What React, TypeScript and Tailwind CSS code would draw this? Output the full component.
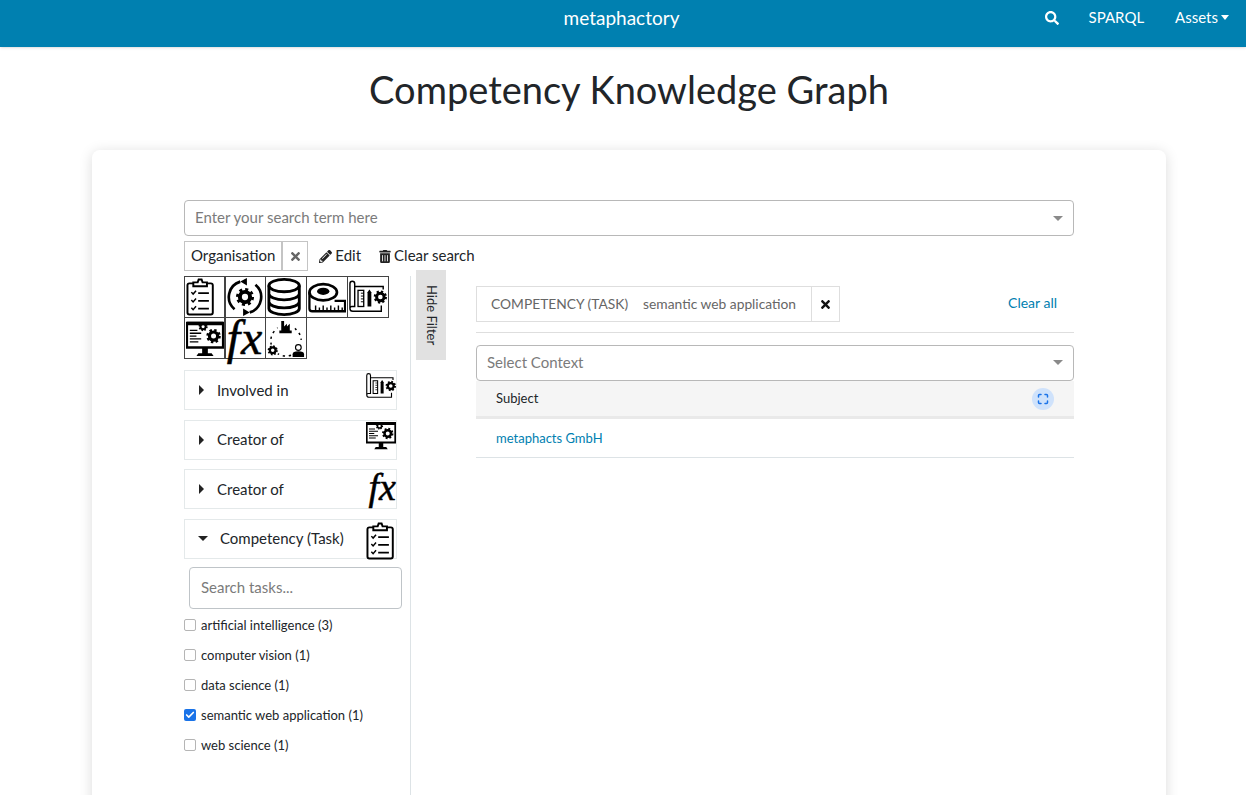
import { Check, Maximize } from 'lucide-react';
import { FaPencilAlt, FaSearch, FaTimes, FaTrashAlt } from 'react-icons/fa';

type IconProps = { className?: string };

const Gear = ({ x, y, r }: { x: number; y: number; r: number }) => (
    <g>
        <circle cx={x} cy={y} r={r * 0.72} fill="none" stroke="#000" strokeWidth={r * 0.56} />
        <circle cx={x} cy={y} r={r * 1.02} fill="none" stroke="#000" strokeWidth={r * 0.5} strokeDasharray={`${r * 0.4} ${r * 0.4}`} />
    </g>
);

const ClipboardIcon = ({ className }: IconProps) => (
    <svg viewBox="5.500 0.500 29 39" preserveAspectRatio="xMinYMid" className={className}>
        <path d="M9 6h22a2 2 0 0 1 2 2v28a2 2 0 0 1-2 2H9a2 2 0 0 1-2-2V8a2 2 0 0 1 2-2z" fill="#fff" stroke="#000" strokeWidth="2" />
        <path d="M13 9V5h4.500l1-3h3l1 3H27v4z" fill="#fff" stroke="#000" strokeWidth="2" />
        <path d="M11 15l1.800 2 3-3.500M11 23l1.800 2 3-3.500M11 31l1.800 2 3-3.500" fill="none" stroke="#000" strokeWidth="1.500" />
        <path d="M18 16h11M18 24h11M18 32h11" stroke="#000" strokeWidth="1.800" />
    </svg>
);

const CycleIcon = ({ className }: IconProps) => (
    <svg viewBox="0 0 40 40" className={className}>
        <path d="M15 3.800A17 17 0 0 0 9 33M25 36.200A17 17 0 0 0 31 7" fill="none" stroke="#000" strokeWidth="2.800" />
        <path d="M22 0l-7 3.800 7 4zM18 40l7-3.800-7-4z" fill="#000" />
        <Gear x={20} y={20} r={7.500} />
    </svg>
);

const DatabaseIcon = ({ className }: IconProps) => (
    <svg viewBox="0 0 40 40" className={className}>
        <ellipse cx="18" cy="8" rx="16" ry="6.500" fill="none" stroke="#000" strokeWidth="3" />
        <path d="M2 8v24c0 3.600 7.200 6.500 16 6.500s16-2.900 16-6.500V8M2 16.500c0 3.600 7.200 6.500 16 6.500s16-2.900 16-6.500M2 25c0 3.600 7.200 6.500 16 6.500s16-2.900 16-6.500" fill="none" stroke="#000" strokeWidth="3" />
    </svg>
);

const TapeIcon = ({ className }: IconProps) => (
    <svg viewBox="0 0 40 40" className={className}>
        <ellipse cx="16" cy="15" rx="14.500" ry="8.500" fill="none" stroke="#000" strokeWidth="2.800" />
        <ellipse cx="16" cy="14" rx="6.500" ry="3.800" fill="#000" />
        <path d="M1.500 15v17a3 3 0 0 0 3 3H39V24H28" fill="none" stroke="#000" strokeWidth="2.400" />
        <path d="M8 35v-6M12 35v-4M16 35v-6M20 35v-4M24 35v-6M28 35v-4M32 35v-6M36 35v-4" stroke="#000" strokeWidth="1.500" />
    </svg>
);

const BlueprintIcon = ({ className }: IconProps) => (
    <svg viewBox="0 0 40 40" className={className}>
        <path d="M1 6a2.500 2.500 0 0 1 5 0v24H3a2 2 0 0 0-2 2zM1 32a3 3 0 0 0 3 3h30v-6M6 9h30v3" fill="none" stroke="#000" strokeWidth="1.500" />
        <rect x="9.500" y="13" width="6" height="17" fill="#fff" stroke="#000" strokeWidth="1.400" />
        <path d="M12.500 16h3M12.500 19h3M12.500 22h3M12.500 25h3" stroke="#000" />
        <path d="M19.500 15l2-3 2 3v15h-4z" fill="#000" />
        <Gear x={33} y={20} r={5.500} />
    </svg>
);

const MonitorIcon = ({ className }: IconProps) => (
    <svg viewBox="0 0 40 40" className={className}>
        <path d="M1 4h38v26H1z" fill="#fff" stroke="#000" strokeWidth="2.400" />
        <path d="M1 3h38v3.500H1zM13 36h14l2 3H11zM17 30h6v6h-6z" fill="#000" />
        <path d="M4 12h8M4 15h12M4 18h7M4 21h12M4 24h9" stroke="#000" strokeWidth="1.400" />
        <Gear x={18} y={8} r={3.800} />
        <Gear x={29} y={18} r={6} />
    </svg>
);

const FactoryCycleIcon = ({ className }: IconProps) => (
    <svg viewBox="0 0 40 40" className={className}>
        <circle cx="20" cy="23" r="16" fill="none" stroke="#000" strokeWidth="1.600" strokeDasharray="2.500 4" />
        <rect x="11" y="0" width="18" height="17" fill="#fff" />
        <path d="M15 12V2h3v6l3-3v3l3-3v7h2v3H13v-3z" fill="#000" />
        <circle cx="6" cy="33" r="6.500" fill="#fff" />
        <Gear x={6} y={33} r={4.200} />
        <rect x="26" y="22" width="14" height="18" fill="#fff" />
        <circle cx="33" cy="30" r="3" fill="none" stroke="#000" strokeWidth="1.200" />
        <path d="M27 40v-3q0-3 6-3t6 3v3z" fill="#000" />
    </svg>
);

const FxGlyph = ({ className }: IconProps) => (
    <span className={`block font-['Liberation_Serif',serif] italic text-black [-webkit-text-stroke:0.5px_black] ${className ?? ''}`}>fx</span>
);

const Caret = ({ className }: IconProps) => <span className={`inline-block border-x-[5px] border-t-[5px] border-x-transparent ${className ?? ''}`} />;

const iconGrid = [
    <ClipboardIcon className="h-full w-full" />,
    <CycleIcon className="h-full w-full" />,
    <DatabaseIcon className="h-full w-full" />,
    <TapeIcon className="h-full w-full" />,
    <BlueprintIcon className="h-full w-full" />,
    <MonitorIcon className="h-full w-full" />,
    <FxGlyph className="text-center text-[48px] leading-[38px] tracking-[1px]" />,
    <FactoryCycleIcon className="h-full w-full" />,
];

const relations = [
    { label: 'Involved in', icon: <BlueprintIcon className="h-[30px] w-[30px]" /> },
    { label: 'Creator of', icon: <MonitorIcon className="-mt-px h-[30px] w-[30px]" /> },
    { label: 'Creator of', icon: <FxGlyph className="text-[38px] leading-[34px]" /> },
];

const tasks = [
    { label: 'artificial intelligence (3)', checked: false },
    { label: 'computer vision (1)', checked: false },
    { label: 'data science (1)', checked: false },
    { label: 'semantic web application (1)', checked: true },
    { label: 'web science (1)', checked: false },
];

const App = () => {
    return (
        <div className="h-[795px] overflow-hidden bg-white font-['Lato',sans-serif] text-[#212529]">
            <nav className="relative flex h-[47px] items-start justify-end bg-[#0080b0] pr-[17px] text-[15px] text-white shadow-sm">
                <span className="absolute left-0 right-[3px] top-[5px] text-center text-[19px] leading-[25px]">metaphactory</span>
                <FaSearch className="mr-[30px] mt-[11px] h-[14px] w-[14px]" />
                <span className="mr-[31px] mt-[7px] leading-[20px]">SPARQL</span>
                <span className="mt-[7px] flex items-center leading-[20px]">
                    Assets
                    <span className="ml-[3px] inline-block border-x-[4.500px] border-t-[5px] border-x-transparent border-t-white" />
                </span>
            </nav>

            <h1 className="pl-[12px] pt-[18px] text-center text-[38px] font-normal leading-[48px]">Competency Knowledge Graph</h1>

            <main className="ml-[92px] mr-[80px] mt-[37px] h-[700px] rounded-lg bg-white px-[92px] pt-[50px] shadow-[0_2px_14px_rgba(0,0,0,0.14)]">
                <div className="flex h-9 items-center justify-between rounded border border-[#b8b8b8] pb-[2px] pl-[10px] pr-[10px] text-[15px] text-[#7b7b7b]">
                    Enter your search term here
                    <Caret className="mt-[2px] border-t-[#8a8a8a]" />
                </div>

                <div className="mt-[5px] flex h-[30px] items-center text-[15px]">
                    <span className="flex h-[30px] items-center border border-[#c4c4c4] pb-px pl-[6px] pr-[6px]">Organisation</span>
                    <span className="flex h-[30px] w-[26px] items-center justify-center border border-[#c4c4c4]">
                        <FaTimes className="h-[13px] w-[11px] text-[#666]" />
                    </span>
                    <FaPencilAlt className="ml-[11px] h-[13px] w-[13px] text-[#222]" />
                    <span className="ml-[3px] pb-px">Edit</span>
                    <FaTrashAlt className="ml-[18px] h-[13px] w-[12px] text-[#222]" />
                    <span className="ml-[3px] pb-px">Clear search</span>
                </div>

                <div className="flex">
                    <aside className="mt-[5px] h-[600px] w-[227px] border-r border-[#dde3e6] pr-[8px]">
                        <div className="grid w-[205px] grid-cols-[40px_41px_41px_41px_41px]">
                            {iconGrid.map((icon, i) => (
                                <div key={i} className="-mb-px h-[42px] w-[42px] border border-[#444] p-px">
                                    {icon}
                                </div>
                            ))}
                        </div>

                        <div className="mt-[12px] flex w-[213px] flex-col gap-[9.500px] text-[15px]">
                            {relations.map((rel, i) => (
                                <div key={i} className="flex h-[40px] items-center justify-between border border-[#e4e9ea] pl-[14px]">
                                    <span className="flex items-center">
                                        <span className="inline-block border-y-[5px] border-l-[5px] border-y-transparent border-l-[#222]" />
                                        <span className="ml-[13px]">{rel.label}</span>
                                    </span>
                                    <span className="flex h-[30px] self-start">{rel.icon}</span>
                                </div>
                            ))}
                            <div className="flex h-[40px] items-center justify-between border border-[#e4e9ea] pl-[13px]">
                                <span className="flex items-center">
                                    <Caret className="border-t-[#222]" />
                                    <span className="ml-[12px]">Competency (Task)</span>
                                </span>
                                <ClipboardIcon className="mt-[2px] h-[38px] w-[30px] shrink-0 self-start" />
                            </div>
                        </div>

                        <div className="ml-[5px] mt-[8px] flex h-[42px] w-[213px] items-center rounded border border-[#bfc4c8] pl-[11px] text-[15px] text-[#7b7b7b]">Search tasks...</div>

                        <ul className="mt-[1px] text-[13px] leading-[30px]">
                            {tasks.map((task) => (
                                <li key={task.label} className="flex h-[30px] items-center">
                                    {task.checked ? (
                                        <span className="flex h-[12px] w-[12px] items-center justify-center rounded-[2px] bg-[#1a73e8]">
                                            <Check className="h-[10px] w-[10px] text-white" strokeWidth={4} />
                                        </span>
                                    ) : (
                                        <span className="h-[12px] w-[12px] rounded-[2px] border border-[#b5b5b5]" />
                                    )}
                                    <span className="ml-[5px]">{task.label}</span>
                                </li>
                            ))}
                        </ul>
                    </aside>

                    <div className="ml-[5px] mt-[-1px] flex h-[90px] w-[30px] items-center justify-center bg-[#e1e1e1] text-[13px] [writing-mode:vertical-rl]">Hide Filter</div>

                    <section className="ml-[30px] w-[598px] pt-[15px]">
                        <div className="flex h-[47px] items-start justify-between border-b border-[#dedede]">
                            <div className="flex h-[36px] items-center text-[13.800px] text-[#666]">
                                <span className="flex h-[36px] items-center border border-[#dedede] pl-[14px] pr-[15px]">
                                    COMPETENCY (TASK)
                                    <span className="ml-[15px]">semantic web application</span>
                                </span>
                                <span className="flex h-[36px] w-[28px] items-center justify-center border border-l-0 border-[#dedede]">
                                    <FaTimes className="h-[13px] w-[11px] text-[#111]" />
                                </span>
                            </div>
                            <span className="mr-[17px] mt-[7px] text-[14px] leading-[20px] text-[#0080b0]">Clear all</span>
                        </div>

                        <div className="mt-[12px] flex h-[36px] items-center justify-between rounded border border-[#b8b8b8] pb-px pl-[10px] pr-[10px] text-[15px] text-[#7b7b7b]">
                            Select Context
                            <Caret className="border-t-[#8a8a8a]" />
                        </div>

                        <div className="flex h-[38px] items-center justify-between border-b-[3px] border-[#e9e9e9] bg-[#f5f5f5] pl-[20px] pr-[20px] text-[13px]">
                            Subject
                            <span className="flex h-[22px] w-[22px] items-center justify-center rounded-full bg-[#cfe2fb]">
                                <Maximize className="h-[12px] w-[12px] text-[#1a73e8]" strokeWidth={3} />
                            </span>
                        </div>

                        <div className="flex h-[39px] items-center border-b border-[#dde3e6] pl-[20px] pt-px text-[13px] text-[#0080b0]">metaphacts GmbH</div>
                    </section>
                </div>
            </main>
        </div>
    );
};

export default App;
